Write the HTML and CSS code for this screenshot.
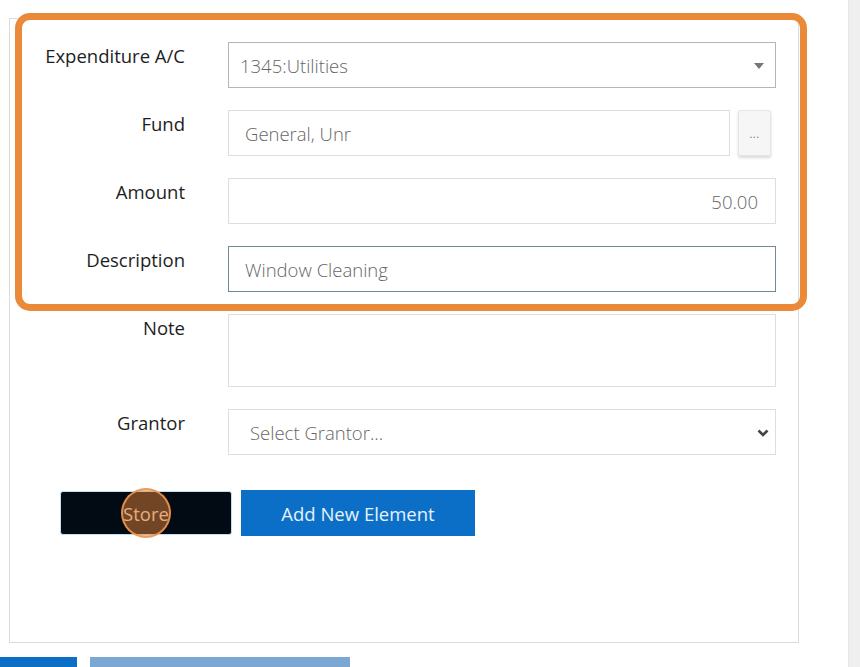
FILE: index.html
```html
<!DOCTYPE html>
<html>
<head>
<meta charset="utf-8">
<link rel="stylesheet" href="styles.css">
</head>
<body>
<div class="page">
  <div class="content">
    <div class="panel">
      <div class="row">
        <div class="label">Expenditure A/C</div>
        <div class="field select-field dark-border">
          <span class="val">1345:Utilities</span>
          <svg class="tri" width="10" height="6" viewBox="0 0 10 6"><path d="M0 0 L10 0 L5 6 Z" fill="#777"/></svg>
        </div>
      </div>
      <div class="row">
        <div class="label">Fund</div>
        <div class="fund-wrap">
          <div class="field fund-field"><span class="val pad16">General, Unr</span></div>
          <div class="dots">...</div>
        </div>
      </div>
      <div class="row">
        <div class="label">Amount</div>
        <div class="field amount-field"><span class="val">50.00</span></div>
      </div>
      <div class="row">
        <div class="label">Description</div>
        <div class="field desc-field"><span class="val pad16">Window Cleaning</span></div>
      </div>
      <div class="row">
        <div class="label">Note</div>
        <div class="field note-field"></div>
      </div>
      <div class="row last">
        <div class="label">Grantor</div>
        <div class="field select-field grantor-field">
          <span class="val pad21">Select Grantor...</span>
          <svg class="chev" width="12" height="8" viewBox="0 0 12 8"><path d="M1.5 1.5 L6 6 L10.5 1.5" fill="none" stroke="#444" stroke-width="2.6"/></svg>
        </div>
      </div>
      <div class="actions">
        <div class="btn store">Store<span class="click"></span></div>
        <div class="btn add">Add New Element</div>
      </div>
    </div>
    <div class="bottom">
      <div class="bbtn blue"></div>
      <div class="bbtn light"></div>
    </div>
    <div class="highlight"></div>
  </div>
  <div class="scrollbar"></div>
</div>
</body>
</html>
```
FILE: styles.css
```css
html, body {
  margin: 0;
  padding: 0;
  background: #fff;
  height: 100%;
  overflow: hidden;
}
body {
  font-family: "Open Sans", "Liberation Sans", sans-serif;
  color: #222;
}
.page {
  display: flex;
  width: 860px;
  height: 667px;
}
.content {
  position: relative;
  width: 848px;
  padding: 18px 0 0 9px;
  box-sizing: border-box;
}
.scrollbar {
  width: 12px;
  height: 667px;
  background: #efefef;
  border-left: 1px solid #e6e6e6;
  box-sizing: border-box;
}
.panel {
  width: 790px;
  height: 625px;
  box-sizing: border-box;
  border: 1px solid #dcdcdc;
  padding-top: 23px;
}
.row {
  display: flex;
  gap: 43px;
  margin-bottom: 22px;
}
.row.last {
  margin-top: 1px;
  margin-bottom: 35px;
}
.label {
  width: 175px;
  text-align: right;
  font-size: 18.5px;
  line-height: 24px;
  padding-top: 2px;
  color: #1e1e1e;
}
.field {
  position: relative;
  width: 548px;
  height: 46px;
  box-sizing: border-box;
  border: 1px solid #dedede;
  background: #fff;
  display: flex;
  align-items: center;
}
.val {
  font-size: 18.5px;
  font-weight: 300;
  color: #666;
  padding-left: 11px;
}
.pad16 { padding-left: 16px; }
.pad21 { padding-left: 21px; }
.dark-border {
  border-color: #b5b5b5;
}
.tri {
  position: absolute;
  right: 11px;
  top: 20px;
}
.chev {
  position: absolute;
  right: 6px;
  top: 19px;
}
.fund-wrap {
  display: flex;
  gap: 8px;
}
.fund-field {
  width: 502px;
}
.dots {
  width: 33px;
  height: 46px;
  background: #f6f6f6;
  border: 1px solid #e6e6e6;
  box-sizing: border-box;
  border-radius: 2px;
  box-shadow: 0 2px 3px rgba(0,0,0,0.15);
  display: flex;
  align-items: center;
  justify-content: center;
  font-size: 11px;
  color: #777;
  letter-spacing: 0.5px;
}
.amount-field {
  justify-content: flex-end;
}
.amount-field .val {
  padding-left: 0;
  padding-right: 17px;
}
.desc-field {
  border-color: #6f8a93;
}
.note-field {
  height: 73px;
}
.actions {
  display: flex;
  align-items: center;
  gap: 9px;
  padding-left: 50px;
}
.btn {
  position: relative;
  display: flex;
  align-items: center;
  justify-content: center;
  font-size: 18.5px;
  color: #fff;
  box-sizing: border-box;
}
.store {
  width: 172px;
  height: 44px;
  background: #020a13;
  border: 1px solid #bfe0f0;
  border-radius: 3px;
  color: #ead8c8;
}
.click {
  position: absolute;
  left: 60px;
  top: -4px;
  width: 50px;
  height: 50px;
  border-radius: 50%;
  box-sizing: border-box;
  background: rgba(226, 130, 55, 0.5);
  border: 2px solid rgba(240, 150, 80, 0.9);
}
.add {
  width: 234px;
  height: 46px;
  background: #0b6fc8;
  color: #e6f1fb;
}
.bottom {
  display: flex;
  gap: 13px;
  margin-left: -9px;
  margin-top: 14px;
}
.bbtn {
  height: 12px;
}
.bbtn.blue {
  width: 77px;
  background: #0b6fc8;
}
.bbtn.light {
  width: 260px;
  background: #7ba7d3;
}
.highlight {
  position: absolute;
  left: 15px;
  top: 13px;
  width: 792px;
  height: 298px;
  box-sizing: border-box;
  border: 7px solid #ea8a38;
  border-radius: 15px;
  pointer-events: none;
}
```
